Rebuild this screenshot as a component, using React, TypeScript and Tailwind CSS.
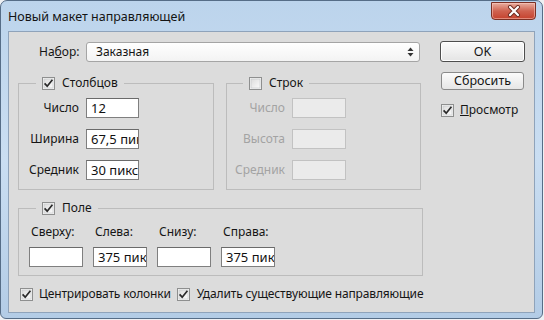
import React from "react";

function Check({ checked }: { checked: boolean }) {
  return (
    <svg width="13" height="13" viewBox="0 0 13 13" className="shrink-0">
      <defs>
        <linearGradient id="cbg" x1="0" y1="0" x2="1" y2="1">
          <stop offset="0" stopColor="#dcdcdc" />
          <stop offset="1" stopColor="#fbfbfb" />
        </linearGradient>
      </defs>
      <rect x="0.5" y="0.5" width="12" height="12" fill="#f4f4f4" stroke="#8e8f8f" />
      <rect x="2" y="2" width="9" height="9" fill="url(#cbg)" stroke="#c4c6c8" strokeWidth="0.6" />
      {checked && (
        <path d="M2.6 6.4 L5.2 9.2 L10.4 2.8" fill="none" stroke="#2a2a2a" strokeWidth="1.7" />
      )}
    </svg>
  );
}

function Field({ value, w = "w-[53px]" }: { value?: string; w?: string }) {
  return (
    <div
      className={`${w} h-[20px] shrink-0 bg-white border border-[#7f7f7f] border-t-[#6a6a6a] overflow-hidden whitespace-nowrap pl-[4px] text-[13px] leading-[18px] text-[#111]`}
    >
      {value}
    </div>
  );
}

function DisabledField() {
  return <div className="w-[54px] h-[20px] shrink-0 bg-[#ebebeb] border border-[#c2c2c2]" />;
}

export default function App() {
  return (
    <div className="w-[544px] h-[320px] bg-[#eef0f3] font-['Noto_Sans',sans-serif] text-[12px] text-[#151515] overflow-hidden">
      <div className="w-[543px] h-[319px] rounded-t-[7px] rounded-b-[6px] border border-[#566d87] bg-gradient-to-b from-[#bcd4ec] via-[#cadef2] to-[#b3cce6] flex flex-col">
        {/* title bar */}
        <div className="h-[30px] flex items-start shrink-0">
          <div className="pl-[7px] pt-[7px] text-[12.5px] leading-[17px] text-[#141414]">
            Новый макет направляющей
          </div>
          <div className="ml-auto mr-[6px] mt-[1px] w-[45px] h-[18px] rounded-b-[4px] border border-[#7b3024] bg-gradient-to-b from-[#e7ad9f] via-[#cf6250] to-[#c5412d] flex items-center justify-center shadow-[inset_0_0_0_1px_rgba(255,210,200,0.5)]">
            <svg width="14" height="12" viewBox="0 0 14 12">
              <path d="M3 2 L11 10 M11 2 L3 10" stroke="#6b2a20" strokeWidth="4" strokeLinecap="round" />
              <path d="M3 2 L11 10 M11 2 L3 10" stroke="#ffffff" strokeWidth="2.2" strokeLinecap="round" />
            </svg>
          </div>
        </div>
        {/* client */}
        <div className="mx-[7px] h-[282px] shrink-0 border border-[#8fa3ba] bg-[#dcdcdc] flex pt-[9px] pl-[9px]">
          {/* left column */}
          <div className="w-[405px] flex flex-col pt-[1px]">
            <div className="flex items-center h-[20px]">
              <div className="w-[68px] pl-[21px]">
                На<span className="underline">б</span>ор:
              </div>
              <div className="w-[334px] h-[20px] rounded-[3px] border border-[#a5a5a5] bg-gradient-to-b from-[#ffffff] to-[#f3f3f3] flex items-center pl-[9px] pr-[5px]">
                <span className="flex-1 leading-[18px]">Заказная</span>
                <svg width="7" height="10" viewBox="0 0 7 10">
                  <path d="M3.5 0.5 L6.5 4 L0.5 4 Z" fill="#333" />
                  <path d="M0.5 6 L6.5 6 L3.5 9.5 Z" fill="#333" />
                </svg>
              </div>
            </div>

            <div className="flex gap-[12px] mt-[13px]">
              <fieldset className="w-[196px] border border-[#bcbcbc] p-0 m-0 min-w-0">
                <legend className="ml-[17px] px-[6px] h-[16px] flex items-center gap-[7px] leading-[16px]">
                  <Check checked />
                  <span>Столбцов</span>
                </legend>
                <div className="flex flex-col gap-[11px] pt-[7px] pb-[9px]">
                  {[
                    ["Число", "12"],
                    ["Ширина", "67,5 пикс."],
                    ["Средник", "30 пикс."],
                  ].map(([l, v]) => (
                    <div key={l} className="flex items-center gap-[7px]">
                      <div className="w-[60px] text-right leading-[16px]">{l}</div>
                      <Field value={v} />
                    </div>
                  ))}
                </div>
              </fieldset>
              <fieldset className="w-[195px] border border-[#bcbcbc] p-0 m-0 min-w-0">
                <legend className="ml-[16px] px-[6px] h-[16px] flex items-center gap-[7px] leading-[16px]">
                  <Check checked={false} />
                  <span>Строк</span>
                </legend>
                <div className="flex flex-col gap-[11px] pt-[7px] pb-[9px]">
                  {["Число", "Высота", "Средник"].map((l) => (
                    <div key={l} className="flex items-center gap-[7px]">
                      <div className="w-[58px] text-right leading-[16px] text-[#a3a3a3]">{l}</div>
                      <DisabledField />
                    </div>
                  ))}
                </div>
              </fieldset>
            </div>

            <fieldset className="w-[405px] mt-[10px] border border-[#bcbcbc] p-0 m-0 min-w-0">
              <legend className="ml-[17px] px-[6px] h-[16px] flex items-center gap-[7px] leading-[16px]">
                <Check checked />
                <span>Поле</span>
              </legend>
              <div className="flex gap-[10px] pl-[10px] pt-[8px] pb-[8px]">
                {[
                  ["Сверху:", ""],
                  ["Слева:", "375 пикс."],
                  ["Снизу:", ""],
                  ["Справа:", "375 пикс."],
                ].map(([l, v]) => (
                  <div key={l} className="flex flex-col gap-[7px] w-[54px]">
                    <div className="leading-[16px] pl-[2px] whitespace-nowrap">{l}</div>
                    <Field value={v} w="w-[54px]" />
                  </div>
                ))}
              </div>
            </fieldset>

            <div className="flex items-center h-[16px] mt-[10px] pl-[2px] whitespace-nowrap tracking-[-0.15px]">
              <Check checked />
              <span className="ml-[6px]">Центрировать колонки</span>
              <span className="ml-[6px]">
                <Check checked />
              </span>
              <span className="ml-[7px]">Удалить существующие направляющие</span>
            </div>
          </div>

          {/* right column */}
          <div className="ml-[17px] w-[85px] flex flex-col">
            <button className="w-[85px] h-[21px] rounded-[3px] border border-[#4e4e4e] bg-gradient-to-b from-[#fbfbfb] to-[#e4e4e4] shadow-[inset_0_0_0_1px_#ffffff] text-[12.5px] leading-[18px] text-[#151515]">
              OK
            </button>
            <button className="ml-[1px] mt-[10px] w-[83px] h-[18px] rounded-[3px] border border-[#8a8a8a] bg-gradient-to-b from-[#fbfbfb] to-[#e6e6e6] text-[12.5px] leading-[16px] text-[#151515]">
              Сбросить
            </button>
            <div className="ml-[1px] mt-[12px] h-[16px] flex items-center gap-[6px]">
              <Check checked />
              <span className="leading-[16px]">
                <span className="underline">П</span>росмотр
              </span>
            </div>
          </div>
        </div>
      </div>
    </div>
  );
}
